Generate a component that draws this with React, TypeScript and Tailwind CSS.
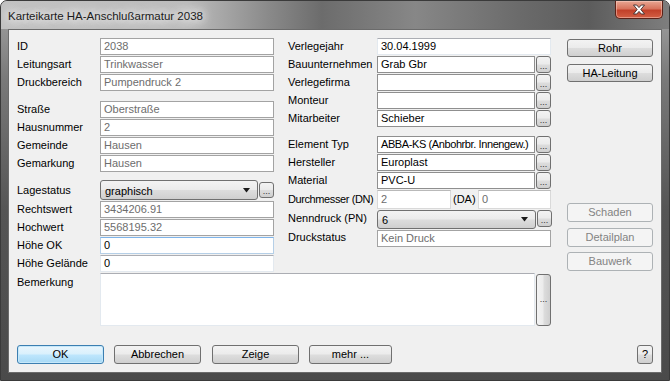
import type { ReactNode } from "react";

const grad =
  "bg-[linear-gradient(180deg,#f3f3f3_0%,#ebebeb_48%,#dddddd_52%,#cfcfcf_100%)]";

const Label = ({ children, w, h = "h-[17px]" }: { children: ReactNode; w: string; h?: string }) => (
  <div className={`${w} ${h} flex items-center shrink-0 text-[11px] text-black whitespace-nowrap`}>{children}</div>
);

type BoxKind = "ro" | "edit" | "light" | "focus" | "dim";

const boxBorder: Record<BoxKind, string> = {
  ro: "border-[#a3a3a3] text-[#6d6d6d]",
  edit: "border-[#8f8f8f] text-black",
  light: "border-[#e3e9ef] border-t-[#abadb3] text-black",
  focus: "border-[#b5cfe7] border-t-[#7eb4ea] text-black",
  dim: "border-[#d9d9d9] border-t-[#b9b9b9] text-[#6d6d6d]",
};

const Box = ({
  children,
  w,
  kind = "ro",
  h = "h-[17px]",
}: {
  children?: ReactNode;
  w: string;
  kind?: BoxKind;
  h?: string;
}) => (
  <div
    className={`${w} ${h} ${boxBorder[kind]} shrink-0 border bg-white px-[3px] flex items-center text-[11px] overflow-hidden whitespace-nowrap`}
  >
    {children}
  </div>
);

const Dots = ({ h = "h-[17px]" }: { h?: string }) => (
  <div
    className={`w-[15px] ${h} ${grad} ml-[1px] shrink-0 rounded-[3px] border border-[#707070] flex items-end justify-center pb-[1px] text-[9px] leading-none text-[#333]`}
  >
    ...
  </div>
);

const Combo = ({ children, w, h = "h-[20px]" }: { children: ReactNode; w: string; h?: string }) => (
  <div
    className={`${w} ${h} ${grad} shrink-0 rounded-[3px] border border-[#707070] pl-[4px] pr-[6px] flex items-center justify-between text-[11px] text-black`}
  >
    <span className="pt-[2px]">{children}</span>
    <svg width="8" height="5" viewBox="0 0 8 5">
      <path d="M0 0h7L3.5 4.5z" fill="#1a1a1a" />
    </svg>
  </div>
);

const Btn = ({
  children,
  w = "w-[86px]",
  disabled,
  primary,
  className = "",
}: {
  children: ReactNode;
  w?: string;
  disabled?: boolean;
  primary?: boolean;
  className?: string;
}) => {
  const look = disabled
    ? "border-[#adb2b5] bg-[#f4f4f4] text-[#838383]"
    : primary
      ? "border-[#3c7fb1] bg-[linear-gradient(180deg,#eaf6fd_0%,#d9f0fc_48%,#bee6fd_52%,#a7d9f5_100%)] text-black shadow-[inset_0_0_0_1px_#c6e8fa]"
      : `border-[#707070] ${grad} text-black`;
  return (
    <div
      className={`${w} h-[19px] ${look} ${className} shrink-0 rounded-[3px] border flex items-center justify-center text-[11px]`}
    >
      {children}
    </div>
  );
};

const Row = ({ children, h = "h-[18px]" }: { children: ReactNode; h?: string }) => (
  <div className={`${h} flex items-start`}>{children}</div>
);

function LeftColumn() {
  const L = "w-[83px]";
  const W = "w-[174px]";
  return (
    <div className="w-[257px] flex flex-col">
      <Row><Label w={L}>ID</Label><Box w={W}>2038</Box></Row>
      <Row><Label w={L}>Leitungsart</Label><Box w={W}>Trinkwasser</Box></Row>
      <Row><Label w={L}>Druckbereich</Label><Box w={W}>Pumpendruck 2</Box></Row>
      <div className="mt-[9px]" />
      <Row><Label w={L}>Straße</Label><Box w={W}>Oberstraße</Box></Row>
      <Row><Label w={L}>Hausnummer</Label><Box w={W}>2</Box></Row>
      <Row><Label w={L}>Gemeinde</Label><Box w={W}>Hausen</Box></Row>
      <Row><Label w={L}>Gemarkung</Label><Box w={W}>Hausen</Box></Row>
      <div className="mt-[7px]" />
      <Row h="h-[21px]">
        <Label w={L} h="h-[20px]">Lagestatus</Label>
        <Combo w="w-[158px]">graphisch</Combo>
        <div className="mt-[2px] flex"><Dots h="h-[16px]" /></div>
      </Row>
      <Row><Label w={L}>Rechtswert</Label><Box w={W} kind="ro">3434206.91</Box></Row>
      <Row><Label w={L}>Hochwert</Label><Box w={W} kind="ro">5568195.32</Box></Row>
      <Row><Label w={L}>Höhe OK</Label><Box w={W} kind="focus">0</Box></Row>
      <Row><Label w={L}>Höhe Gelände</Label><Box w={W} kind="light">0</Box></Row>
    </div>
  );
}

function MiddleColumn() {
  const L = "w-[89px]";
  const W = "w-[174px]";
  const WB = "w-[158px]";
  return (
    <div className="w-[263px] ml-[14px] flex flex-col">
      <Row><Label w={L}>Verlegejahr</Label><Box w={W} kind="light">30.04.1999</Box></Row>
      <Row><Label w={L}>Bauunternehmen</Label><Box w={WB} kind="edit">Grab Gbr</Box><Dots /></Row>
      <Row><Label w={L}>Verlegefirma</Label><Box w={WB} kind="edit" /><Dots /></Row>
      <Row><Label w={L}>Monteur</Label><Box w={WB} kind="edit" /><Dots /></Row>
      <Row><Label w={L}>Mitarbeiter</Label><Box w={WB} kind="edit">Schieber</Box><Dots /></Row>
      <div className="mt-[8px]" />
      <Row>
        <Label w={L}>Element Typ</Label>
        <Box w={WB} kind="edit">
          <span className="tracking-[-0.4px]">ABBA-KS (Anbohrbr. Innengew.)</span>
        </Box>
        <Dots />
      </Row>
      <Row><Label w={L}>Hersteller</Label><Box w={WB} kind="edit">Europlast</Box><Dots /></Row>
      <Row><Label w={L}>Material</Label><Box w={WB} kind="edit">PVC-U</Box><Dots /></Row>
      <Row h="h-[19px]">
        <Label w={L} h="h-[18px]">
          <span className="tracking-[-0.4px]">Durchmesser (DN)</span>
        </Label>
        <Box w="w-[74px]" kind="dim" h="h-[19px]">2</Box>
        <div className="w-[27px] h-[18px] flex items-center pl-[2px] text-[11px]">(DA)</div>
        <Box w="w-[73px]" kind="dim" h="h-[19px]">0</Box>
      </Row>
      <Row h="h-[21px]">
        <Label w={L} h="h-[18px]">Nenndruck (PN)</Label>
        <div className="mt-[1px] flex">
          <Combo w="w-[159px]" h="h-[19px]">6</Combo>
          <Dots />
        </div>
      </Row>
      <Row><Label w={L} h="h-[15px]">Druckstatus</Label><Box w={W}>Kein Druck</Box></Row>
    </div>
  );
}

function RightColumn() {
  return (
    <div className="ml-[16px] w-[86px] flex flex-col">
      <Btn className="mt-[1px] !h-[18px]">Rohr</Btn>
      <Btn className="mt-[7px] !h-[18px]">HA-Leitung</Btn>
      <Btn disabled className="mt-[121px]">Schaden</Btn>
      <Btn disabled className="mt-[6px]">Detailplan</Btn>
      <Btn disabled className="mt-[5px]">Bauwerk</Btn>
    </div>
  );
}

export default function App() {
  return (
    <div className="w-[670px] h-[381px] bg-white font-['Liberation_Sans',Arial,sans-serif]">
      <div className="w-[670px] h-[381px] flex flex-col rounded-t-[7px] border border-[#3a3a3a] bg-[linear-gradient(180deg,#a4a4a4_0%,#7a7a7a_20%,#555555_55%,#4a4a4a_100%)] overflow-hidden">
        {/* title bar */}
        <div className="h-[28px] shrink-0 flex items-start bg-[linear-gradient(90deg,#c2c2c2_0%,#bcbcbc_28%,#8a8a8a_40%,#6c6c6c_48%,#878787_62%,#6a6a6a_78%,#5c5c5c_88%,#7e7e7e_100%)]">
          <div className="pl-[7px] pt-[7px] text-[11.5px] text-[#1b1b1b] [text-shadow:0_0_8px_#ffffff,0_0_12px_#ffffff,0_0_16px_#ffffff]">
            Karteikarte HA-Anschlußarmatur 2038
          </div>
          <div className="ml-auto mr-[6px] w-[48px] h-[18px] rounded-b-[5px] border border-t-0 border-[#5b2218] bg-[linear-gradient(180deg,#e9a793_0%,#d8745d_45%,#c2412a_55%,#d35f44_100%)] shadow-[inset_0_0_0_1px_rgba(255,220,210,0.45)] flex items-center justify-center">
            <svg width="14" height="11" viewBox="0 0 14 11">
              <path
                d="M1.5 1h3.2L7 3.6 9.3 1h3.2L8.8 5.5l3.7 4.5H9.3L7 7.4 4.7 10H1.5l3.7-4.5z"
                fill="#ffffff"
                stroke="#3a2a2a"
                strokeWidth="0.9"
                strokeLinejoin="round"
              />
            </svg>
          </div>
        </div>

        {/* client area */}
        <div className="flex-1 mx-[7px] mb-[7px] border border-[#6b6b6b] bg-[#f0f0f0] pl-[8px] pr-[8px] pt-[8px] flex flex-col">
          <div className="flex">
            <div className="w-[534px] flex flex-col">
              <div className="flex">
                <LeftColumn />
                <MiddleColumn />
              </div>
              <div className="flex items-start">
                <Label w="w-[83px]" h="h-[18px]">Bemerkung</Label>
                <Box w="w-[435px]" kind="light" h="h-[53px]" />
                <div className="mt-[1px] w-[15px] h-[52px] ml-[1px] rounded-[3px] border border-[#707070] bg-[linear-gradient(90deg,#f3f3f3_0%,#ebebeb_48%,#dddddd_52%,#cfcfcf_100%)] flex items-center justify-center text-[9px] text-[#333]">
                  ...
                </div>
              </div>
            </div>
            <RightColumn />
          </div>

          <div className="mt-[19px] flex items-center">
            <Btn primary w="w-[87px]">OK</Btn>
            <Btn w="w-[87px]" className="ml-[10px]">Abbrechen</Btn>
            <Btn w="w-[87px]" className="ml-[11px]">Zeige</Btn>
            <Btn w="w-[83px]" className="ml-[10px]">mehr ...</Btn>
            <Btn w="w-[16px]" className="ml-auto">?</Btn>
          </div>
        </div>
      </div>
    </div>
  );
}
